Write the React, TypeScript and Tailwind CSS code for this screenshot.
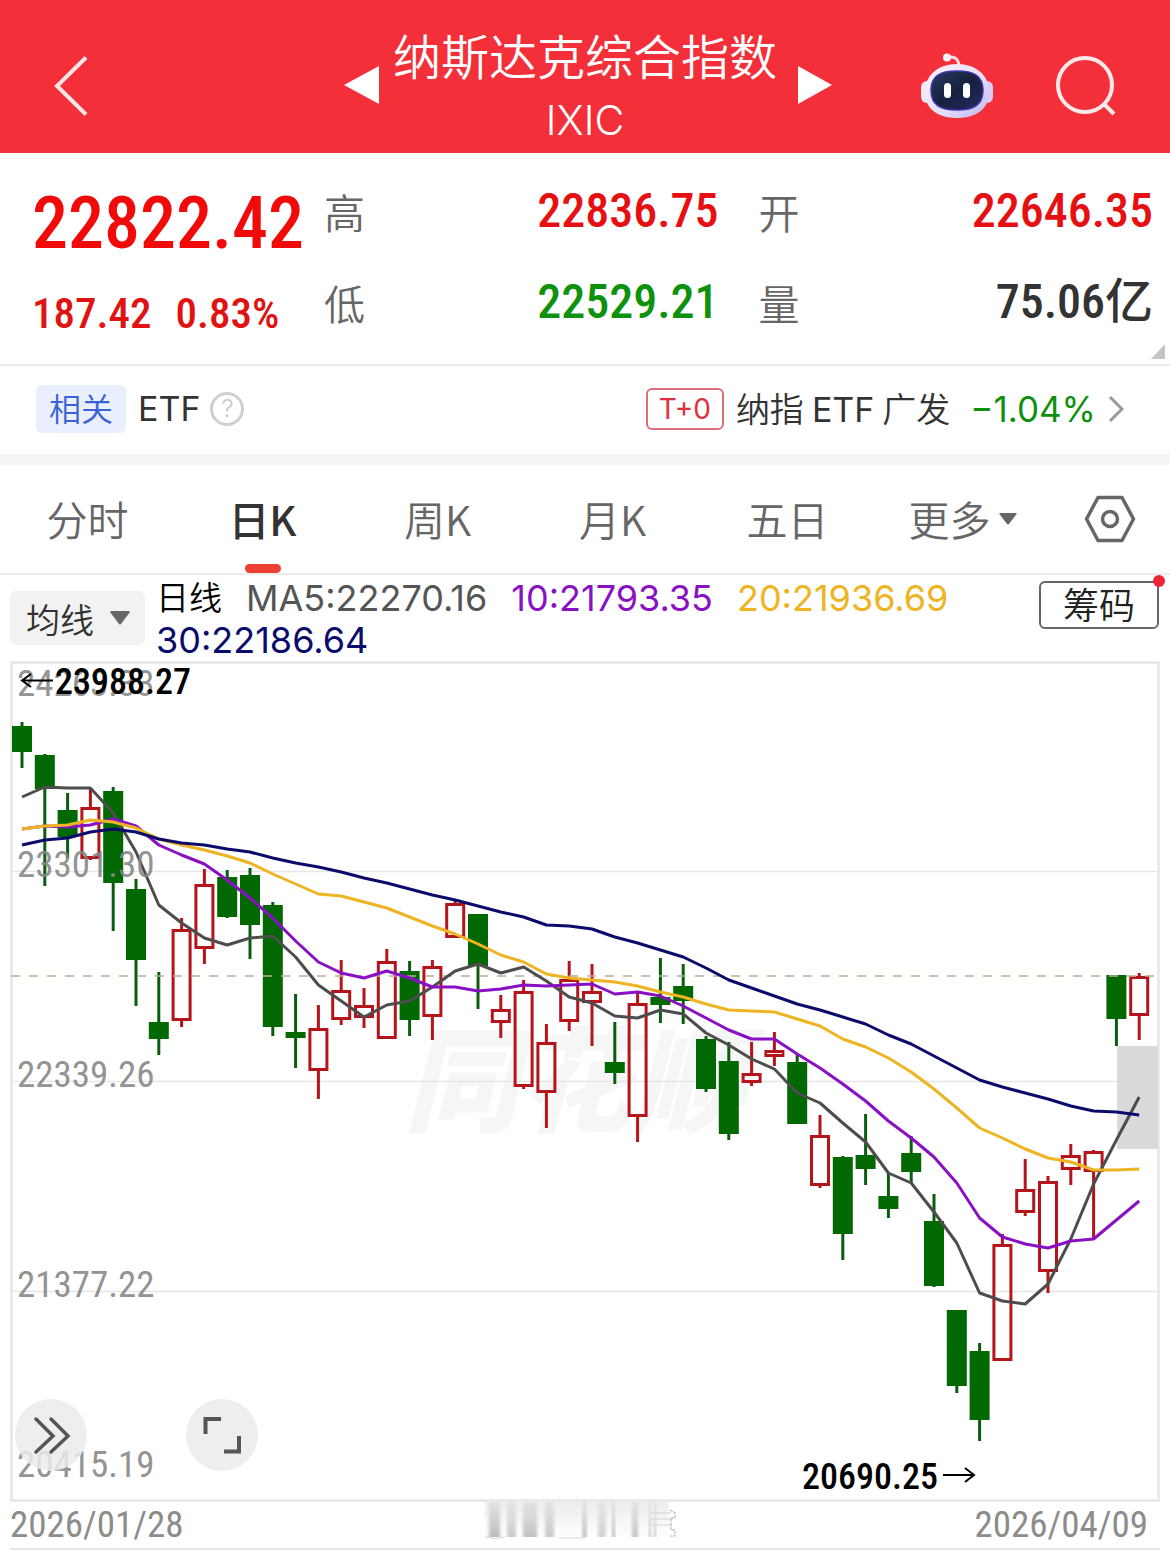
import { useState } from 'react';

// [open/close direction, high, body top, body bottom, low]
type Candle = ['up' | 'down', number, number, number, number];

const CANDLES: Candle[] = [
  ['down', 722, 726, 752, 768],
  ['down', 754, 755, 789, 886],
  ['down', 793, 810, 837, 858],
  ['up', 788, 807, 859, 860],
  ['down', 787, 791, 883, 931],
  ['down', 879, 889, 960, 1006],
  ['down', 972, 1022, 1039, 1055],
  ['up', 918, 929, 1021, 1027],
  ['up', 869, 884, 949, 964],
  ['down', 870, 877, 917, 918],
  ['down', 868, 875, 925, 959],
  ['down', 902, 905, 1027, 1036],
  ['down', 994, 1032, 1038, 1068],
  ['up', 1005, 1028, 1071, 1099],
  ['up', 960, 990, 1020, 1025],
  ['up', 988, 1005, 1018, 1028],
  ['up', 949, 961, 1039, 1039],
  ['down', 961, 971, 1020, 1036],
  ['up', 960, 966, 1017, 1040],
  ['up', 900, 903, 938, 938],
  ['down', 914, 914, 966, 1009],
  ['up', 995, 1009, 1023, 1038],
  ['up', 980, 991, 1087, 1089],
  ['up', 1024, 1042, 1093, 1128],
  ['up', 961, 979, 1022, 1031],
  ['up', 964, 991, 1003, 1046],
  ['down', 1022, 1062, 1073, 1084],
  ['up', 992, 1003, 1117, 1142],
  ['down', 958, 997, 1005, 1023],
  ['down', 964, 986, 1001, 1024],
  ['down', 1036, 1039, 1089, 1092],
  ['down', 1042, 1061, 1134, 1140],
  ['up', 1042, 1073, 1083, 1086],
  ['up', 1032, 1050, 1057, 1066],
  ['down', 1054, 1062, 1124, 1124],
  ['up', 1115, 1135, 1186, 1188],
  ['down', 1156, 1157, 1234, 1260],
  ['down', 1114, 1155, 1169, 1185],
  ['down', 1173, 1196, 1209, 1218],
  ['down', 1136, 1153, 1172, 1183],
  ['down', 1194, 1221, 1286, 1287],
  ['down', 1310, 1310, 1386, 1393],
  ['down', 1343, 1351, 1420, 1441],
  ['up', 1234, 1244, 1361, 1361],
  ['up', 1159, 1189, 1213, 1216],
  ['up', 1176, 1181, 1272, 1293],
  ['up', 1144, 1155, 1170, 1185],
  ['up', 1150, 1151, 1172, 1239],
  ['down', 975, 975, 1019, 1046],
  ['up', 973, 976, 1016, 1040],
];

const MA5 = [
  797, 787, 788, 788, 813, 852, 905, 923, 938, 945, 938, 936, 957, 985, 1001, 1017, 1005, 1001, 987, 971, 964, 973,
  967, 981, 997, 1003, 1016, 1018, 1010, 1014, 1033, 1045, 1059, 1069, 1093, 1103, 1123, 1142, 1173, 1183, 1212,
  1243, 1293, 1301, 1304, 1284, 1239, 1184, 1140, 1097,
];
const MA10 = [
  829, 826, 827, 825, 819, 826, 845, 855, 864, 880, 898, 918, 941, 962, 973, 978, 971, 978, 987, 987, 991, 989, 985,
  986, 985, 984, 994, 992, 996, 1006, 1018, 1030, 1039, 1039, 1054, 1068, 1084, 1101, 1121, 1138, 1157, 1183, 1218,
  1237, 1244, 1248, 1241, 1239, 1220, 1201,
];
const MA20 = [
  829, 826, 825, 820, 822, 828, 839, 845, 850, 856, 863, 874, 884, 894, 896, 902, 908, 917, 926, 934, 944, 955, 962,
  974, 978, 980, 982, 986, 992, 997, 1004, 1010, 1011, 1012, 1019, 1026, 1039, 1047, 1058, 1072, 1089, 1108, 1128,
  1138, 1149, 1158, 1162, 1170, 1170, 1169,
];
const MA30 = [
  845, 840, 838, 832, 829, 832, 839, 843, 845, 849, 852, 858, 863, 867, 872, 878, 883, 889, 895, 900, 906, 912, 917,
  925, 926, 929, 937, 943, 950, 957, 968, 980, 988, 996, 1004, 1010, 1017, 1024, 1035, 1044, 1056, 1068, 1080, 1087,
  1093, 1099, 1106, 1111, 1112, 1115,
];

const AVERAGES = [
  { color: '#4d4d4d', values: MA5 },
  { color: '#8a10c4', values: MA10 },
  { color: '#eeb422', values: MA20 },
  { color: '#0b0b6b', values: MA30 },
];

const AXIS = [
  { label: '24263.33', y: 696 },
  { label: '23301.30', y: 877 },
  { label: '22339.26', y: 1087 },
  { label: '21377.22', y: 1297 },
  { label: '20415.19', y: 1477 },
];

const TABS = ['分时', '日K', '周K', '月K', '五日', '更多'];

const candleX = (i: number) => 22 + i * 22.8;
const linePoints = (values: number[]) => values.map((y, i) => `${candleX(i)},${y}`).join(' ');

function RobotIcon() {
  return (
    <svg width="74" height="66" viewBox="0 0 74 66" fill="none">
      <defs>
        <linearGradient id="shell" x1="0" y1="0" x2="1" y2="1">
          <stop offset="0" stopColor="#fff3f8" />
          <stop offset="0.6" stopColor="#e6dcfa" />
          <stop offset="1" stopColor="#b9b4ee" />
        </linearGradient>
        <linearGradient id="visor" x1="0" y1="0" x2="1" y2="1">
          <stop offset="0" stopColor="#2a3a5c" />
          <stop offset="0.5" stopColor="#17203f" />
          <stop offset="1" stopColor="#232a5e" />
        </linearGradient>
      </defs>
      <path d="M27 5C34 2 39 6 39 14" stroke="#fbdfe6" strokeWidth="3" />
      <circle cx="27" cy="4.500" r="4" fill="#fff0f3" />
      <rect x="1" y="28" width="12" height="22" rx="6" fill="#f3e4f8" />
      <rect x="61" y="28" width="12" height="22" rx="6" fill="#d9ccf5" />
      <path d="M37 11C56 11 69 22 69 39C69 57 55 65 37 65C19 65 5 57 5 39C5 22 18 11 37 11z" fill="url(#shell)" />
      <path
        d="M37 18C54 18 63 23 63 37C63 52 54 57 37 57C20 57 11 52 11 37C11 23 20 18 37 18z"
        fill="url(#visor)"
        stroke="#3b36b0"
        strokeWidth="1.500"
      />
      <rect x="24" y="30" width="7" height="15" rx="3.500" fill="#fff" />
      <rect x="43" y="30" width="7" height="15" rx="3.500" fill="#fff" />
    </svg>
  );
}

function Header() {
  return (
    <header className="grid grid-cols-[1fr_auto_1fr] items-center bg-[#f32f39] px-[54px] pt-5 pb-px text-white">
      <button aria-label="返回" className="justify-self-start">
        <svg width="34" height="60" viewBox="0 0 34 60" fill="none" stroke="#ffe6e6" strokeWidth="4">
          <path d="M32 1.500 3 30 32 58.500" />
        </svg>
      </button>
      <div className="flex items-center gap-3">
        <button aria-label="上一个">
          <svg width="44" height="40" viewBox="0 0 44 40" fill="#fff">
            <path d="M7 19 42 0v38z" />
          </svg>
        </button>
        <div className="flex flex-col items-center">
          <h1 className="text-[48px] leading-[68px] font-[350]">纳斯达克综合指数</h1>
          <p className="font-[Inter] text-[41px] leading-16 font-light">IXIC</p>
        </div>
        <button aria-label="下一个">
          <svg width="44" height="40" viewBox="0 0 44 40" fill="#fff">
            <path d="M43 19 9 0v38z" />
          </svg>
        </button>
      </div>
      <div className="flex items-center gap-[62px] justify-self-end">
        <button aria-label="智能助手">
          <RobotIcon />
        </button>
        <button aria-label="搜索">
          <svg width="60" height="60" viewBox="0 0 60 60" fill="none" stroke="#ffe9e9" strokeWidth="4">
            <circle cx="29" cy="29" r="27" />
            <path d="M48 48 58 58" />
          </svg>
        </button>
      </div>
    </header>
  );
}

function Stat({ label, value, className }: { label: string; value: string; className: string }) {
  return (
    <div className="flex h-[60px] items-start justify-between">
      <dt className="text-[41px] leading-[60px] font-[350] text-[#666]">{label}</dt>
      <dd className={`text-[48px] leading-[52px] font-medium ${className}`}>{value}</dd>
    </div>
  );
}

function Quote() {
  return (
    <section className="relative flex gap-5 border-b-2 border-[#ededed] pt-7 pr-[17px] pb-[21px] pl-8">
      <div className="font-[Roboto_Condensed,Noto_Sans_CJK_SC,sans-serif] font-medium text-[#f00a0a]">
        <div className="text-[72px] leading-[86px]">22822.42</div>
        <div className="flex gap-6 pt-4 text-[43px] leading-[60px] text-[#e01212]">
          <span>187.42</span>
          <span>0.83%</span>
        </div>
      </div>
      <dl className="grid flex-1 grid-cols-2 content-start gap-x-10 gap-y-[31px] pt-1 font-[Roboto_Condensed,Noto_Sans_CJK_SC,sans-serif]">
        <Stat label="高" value="22836.75" className="text-[#e60f12]" />
        <Stat label="开" value="22646.35" className="text-[#e60f12]" />
        <Stat label="低" value="22529.21" className="text-[#0e920e]" />
        <Stat label="量" value="75.06亿" className="text-[#333]" />
      </dl>
      <svg className="absolute right-[5px] bottom-[5px]" width="14" height="15" viewBox="0 0 14 15" fill="#c4c4c4">
        <path d="M14 0v15H0z" />
      </svg>
    </section>
  );
}

function RelatedFund() {
  return (
    <section className="flex items-center justify-between border-b-[11px] border-[#f5f5f5] pt-[19px] pr-[46px] pb-[21px] pl-9 text-[34px] leading-12 font-[350] text-[#333]">
      <div className="flex items-center">
        <span className="rounded-md bg-[#e9effd] px-[13px] pb-1 text-[32px] leading-11 text-[#3a62d8]">相关</span>
        <span className="ml-3 font-[Inter] font-normal">ETF</span>
        <button
          aria-label="帮助"
          className="ml-[10px] flex size-[34px] items-center justify-center rounded-full border-3 border-[#cfcfcf] font-[Inter] text-2xl text-[#c4c4c4]"
        >
          ?
        </button>
      </div>
      <a href="#etf" className="flex items-center">
        <span className="rounded-md border-2 border-[#d9707a] px-[11px] font-[Inter] text-[28px] leading-[38px] font-normal text-[#e0303f]">
          T+0
        </span>
        <span className="ml-3 leading-11">
          纳指<span className="mx-2 font-[Inter] font-normal">ETF</span>广发
        </span>
        <span className="ml-5 font-[Inter] text-[35px] font-normal text-[#0e8f0e]">−1.04%</span>
        <svg className="ml-3" width="16" height="28" viewBox="0 0 16 28" fill="none" stroke="#999" strokeWidth="3">
          <path d="M2 2 14 14 2 26" />
        </svg>
      </a>
    </section>
  );
}

function PeriodTabs({ active, onChange }: { active: string; onChange: (tab: string) => void }) {
  return (
    <nav className="flex border-b-2 border-[#ededed]">
      {TABS.map((tab) => (
        <button
          key={tab}
          onClick={() => onChange(tab)}
          className={`relative flex h-[108px] flex-1 items-center justify-center gap-2 text-[41px] ${
            tab === active ? 'font-medium text-[#333]' : 'font-[350] text-[#666]'
          }`}
        >
          {tab}
          {tab === '更多' && (
            <svg width="18" height="12" viewBox="0 0 18 12" fill="#666">
              <path d="M1 0h16q1 0 .6 1L10 11q-1 1-2 0L.4 1Q0 0 1 0z" />
            </svg>
          )}
          {tab === active && <span className="absolute bottom-0 h-[9px] w-9 rounded-full bg-[#ee3f35]" />}
        </button>
      ))}
      <button aria-label="设置" className="flex w-[120px] items-center justify-center">
        <svg width="52" height="48" viewBox="0 0 52 48" fill="none" stroke="#666" strokeWidth="3.500">
          <path d="M14 2.500h24L49.500 24 38 45.500H14L2.500 24z" strokeLinejoin="round" />
          <circle cx="26" cy="24" r="7.500" />
        </svg>
      </button>
    </nav>
  );
}

function Legend() {
  return (
    <div className="flex items-start pr-[11px] pl-[10px]">
      <div className="relative mt-4">
        <select
          aria-label="指标"
          className="h-[54px] w-[135px] appearance-none rounded-md bg-[#f2f2f2] pl-4 text-[34px] leading-normal font-[350] text-[#333]"
        >
          <option>均线</option>
        </select>
        <svg
          className="pointer-events-none absolute top-5 right-[15px]"
          width="20"
          height="14"
          viewBox="0 0 20 14"
          fill="#666"
        >
          <path d="M1 0h18q1 .3.6 1.500L11 13q-1 1-2 0L.4 1.500Q0 .3 1 0z" />
        </svg>
      </div>
      <div className="ml-[11px] flex flex-1 flex-wrap gap-x-6 pt-[2px] font-[Inter,Noto_Sans_CJK_SC,sans-serif] text-[36px] leading-[42px]">
        <span className="text-[33px] font-[350] text-black">日线</span>
        <span className="text-[#555]">MA5:22270.16</span>
        <span className="text-[#8a10c4]">10:21793.35</span>
        <span className="text-[#eeb422]">20:21936.69</span>
        <span className="text-[#0b0b6b]">30:22186.64</span>
      </div>
      <button className="relative mt-[6px] rounded-md border-2 border-[#666] px-[22px] pb-1 text-[36px] leading-10 font-[350] text-[#222]">
        筹码
        <span className="absolute -top-2 -right-2 size-3 rounded-full bg-[#f0253a]" />
      </button>
    </div>
  );
}

function KLineChart() {
  return (
    <svg
      className="block h-auto w-full font-[Roboto_Condensed,sans-serif] text-[36px] font-medium"
      viewBox="10 661 1150 841"
      fill="none"
    >
      <text x="404" y="1123" className="font-[Noto_Sans_CJK_SC] text-[114px] font-black italic" fill="#f6f6f6">
        同花顺
      </text>
      <g stroke="#e6e6e6">
        <rect x="11.500" y="662.500" width="1147" height="838" strokeWidth="2.500" />
        <path d="M12 871.500H1158M12 1081.500H1158M12 1291.500H1158" strokeWidth="1.500" />
      </g>
      {CANDLES.map(([dir, high, top, bottom, low], i) => {
        const x = candleX(i);
        return dir === 'down' ? (
          <g key={i}>
            <path d={`M${x} ${high}V${low}`} stroke="#0a5c0f" strokeWidth="3" />
            <rect x={x - 10} y={top} width="20" height={bottom - top} fill="#026802" />
          </g>
        ) : (
          <g key={i} stroke="#b5141a" strokeWidth="3">
            <path d={`M${x} ${high}V${top}M${x} ${bottom}V${low}`} />
            <rect x={x - 8.5} y={top + 1.5} width="17" height={bottom - top - 3} />
          </g>
        );
      })}
      <path d="M11 976H1158" stroke="#b9ae98" strokeWidth="1.500" strokeDasharray="9 9" />
      <rect x="1117" y="1046" width="41" height="103" fill="#dadada" />
      {AVERAGES.map(({ color, values }) => (
        <polyline key={color} points={linePoints(values)} stroke={color} strokeWidth="3" strokeLinejoin="round" />
      ))}
      {AXIS.map(({ label, y }) => (
        <text key={label} x="17" y={y} className="text-[37px] font-normal" fill="#858585" fillOpacity="0.9">
          {label}
        </text>
      ))}
      <g stroke="#000" strokeWidth="2">
        <path d="M53 680.500H22M31 674l-9 6.500 9 6.500" />
        <path d="M943 1475H974M965 1468l9 7-9 7" />
      </g>
      <text x="55" y="694" fill="#000">
        23988.27
      </text>
      <text x="802" y="1489" fill="#000">
        20690.25
      </text>
    </svg>
  );
}

function BlurredMark() {
  const bars = [
    { x: 8, w: 11, o: 0.4 },
    { x: 26, w: 9, o: 0.3 },
    { x: 42, w: 14, o: 0.36 },
    { x: 64, w: 9, o: 0.32 },
    { x: 101, w: 5, o: 0.34 },
    { x: 117, w: 8, o: 0.26 },
    { x: 131, w: 3, o: 0.4 },
    { x: 151, w: 6, o: 0.36 },
    { x: 168, w: 2, o: 0.4 },
    { x: 173, w: 2, o: 0.4 },
  ];
  return (
    <svg width="197" height="38" viewBox="0 0 197 38" fill="none">
      <defs>
        <linearGradient id="fade" x1="0" y1="0" x2="0" y2="1">
          <stop offset="0" stopColor="#777" stopOpacity="0.25" />
          <stop offset="1" stopColor="#555" />
        </linearGradient>
        <linearGradient id="haze" x1="0" y1="0" x2="0" y2="1">
          <stop offset="0" stopColor="#ededed" />
          <stop offset="1" stopColor="#fefefe" />
        </linearGradient>
        <filter id="soft" x="-20%" width="140%">
          <feGaussianBlur stdDeviation="1.500 0" />
        </filter>
      </defs>
      <rect x="4" y="0" width="184" height="34" fill="url(#haze)" filter="url(#soft)" />
      {bars.map(({ x, w, o }) => (
        <rect key={x} x={x} y="0" width={w} height="35" fill="url(#fade)" opacity={o} filter="url(#soft)" />
      ))}
      <path d="M4 35q10 3 20 0M78 36h27M170 11h20M170 17h22M170 23h20" stroke="#d4d4d4" strokeWidth="1" />
      <path d="M189 8l5 3v5h-4v12h4v6h-5" stroke="#aaa" strokeWidth="1" strokeDasharray="3 1" />
    </svg>
  );
}

export default function App() {
  const [tab, setTab] = useState('日K');

  return (
    <div className="min-h-screen bg-white font-[Noto_Sans_CJK_SC,sans-serif]">
      <Header />
      <Quote />
      <RelatedFund />
      <PeriodTabs active={tab} onChange={setTab} />
      <Legend />
      <main className="mx-[10px]">
        <div className="relative">
          <KLineChart />
          {/* floating chart controls */}
          <div className="absolute bottom-[31px] left-[5px] flex gap-[99px]">
            <button aria-label="展开工具" className="rounded-full bg-[#ebebeb]/85">
              <svg width="72" height="72" viewBox="0 0 72 72" fill="none" stroke="#555" strokeWidth="3.500">
                <path d="M21 20 38 37 21 53M36 20 53 37 36 53" strokeLinecap="round" />
              </svg>
            </button>
            <button aria-label="全屏" className="rounded-full bg-[#ebebeb]/85">
              <svg width="72" height="72" viewBox="0 0 72 72" fill="none" stroke="#555" strokeWidth="4">
                <path d="M19.500 35V20H35M38 52.500H53V37" />
              </svg>
            </button>
          </div>
        </div>
        <div className="flex items-start justify-between border-b-2 border-[#e6e6e6] font-[Roboto_Condensed,sans-serif] text-[37px] leading-[46px] text-[#8c8c8c]">
          <time>2026/01/28</time>
          <BlurredMark />
          <time className="pr-3">2026/04/09</time>
        </div>
      </main>
    </div>
  );
}
